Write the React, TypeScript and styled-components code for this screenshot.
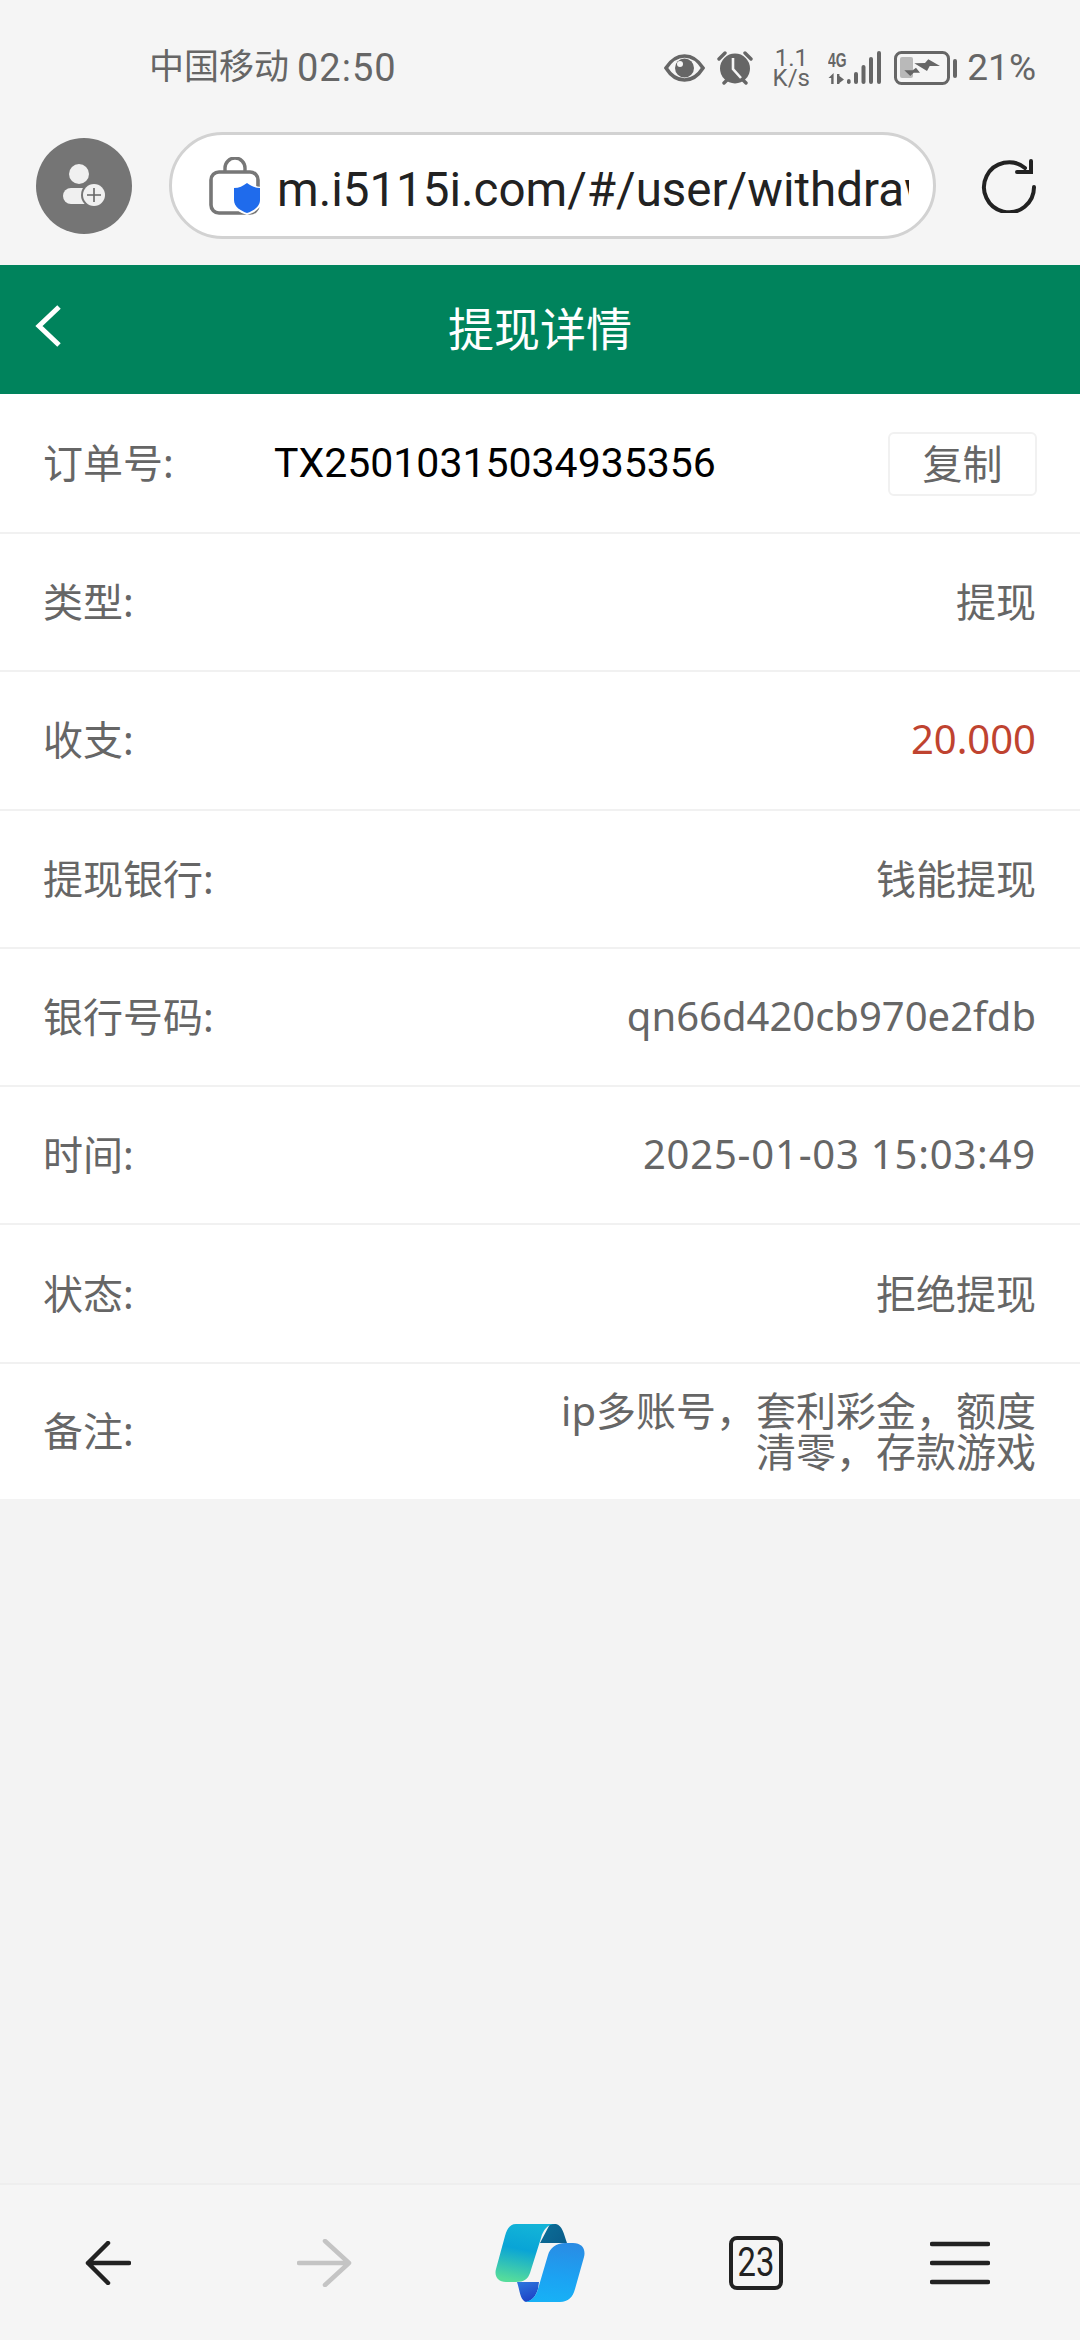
import styled, { createGlobalStyle } from 'styled-components';

const GlobalStyle = createGlobalStyle`
  html, body {
    margin: 0;
    padding: 0;
    background: #f3f3f3;
  }
  * {
    box-sizing: border-box;
  }
`;

const FONT = `Roboto, "Noto Sans CJK SC", "Noto Sans", sans-serif`;
const LIST_FONT = `"Noto Sans", "Noto Sans CJK SC", sans-serif`;

const Page = styled.div`
  width: 1080px;
  height: 2340px;
  display: flex;
  flex-direction: column;
  font-family: ${FONT};
  background: #f3f3f3;
`;

const BrowserTop = styled.div`
  height: 265px;
  background: #f5f5f5;
  display: flex;
  flex-direction: column;
`;

const StatusBar = styled.div`
  height: 132px;
  padding: 3px 44px 0 149px;
  display: flex;
  align-items: center;
  justify-content: space-between;
  color: #666;
`;

const Carrier = styled.div`
  font-size: 35px;
  line-height: 44px;
  display: flex;
  align-items: center;
  gap: 8px;
`;

const Clock = styled.span`
  font-size: 38px;
  letter-spacing: 1px;
`;

const StatusIcons = styled.div`
  display: flex;
  align-items: center;
`;

const Speed = styled.div`
  width: 38px;
  margin: 0 18px 0 19px;
  font-size: 24px;
  line-height: 20px;
  text-align: center;
  white-space: nowrap;
`;

const NetLabel = styled.span`
  position: absolute;
  left: 0;
  top: -1px;
  font-size: 21px;
  line-height: 20px;
  font-weight: 700;
  font-family: "Liberation Sans", sans-serif;
  transform: scaleX(0.66);
  transform-origin: left;
`;

const NetIcon = styled.div`
  position: relative;
  width: 54px;
  height: 34px;
  margin-right: 12px;
`;

const Percent = styled.div`
  font-size: 37px;
  margin-left: 9px;
`;

const IconGap = styled.span`
  width: 12px;
`;

const UrlRow = styled.div`
  display: flex;
  align-items: center;
  height: 107px;
  padding-left: 36px;
`;

const Avatar = styled.div`
  width: 96px;
  height: 96px;
  border-radius: 50%;
  background: #757575;
  display: flex;
  align-items: center;
  justify-content: center;
`;

const UrlField = styled.div`
  width: 767px;
  height: 107px;
  margin: 0 45px 0 37px;
  padding: 0 24px 0 37px;
  border: 3px solid #d2d2d2;
  border-radius: 54px;
  background: #fff;
  display: flex;
  align-items: center;
`;

const UrlText = styled.div`
  flex: 1;
  margin-left: 16px;
  padding-top: 8px;
  overflow: hidden;
  white-space: nowrap;
  font-size: 47.5px;
  color: #222;
`;

const Header = styled.div`
  height: 129px;
  background: #00835c;
  position: relative;
  display: flex;
  align-items: center;
  justify-content: center;
  color: #fff;
  font-size: 46px;
  padding-bottom: 8px;
`;

const BackButton = styled.div`
  position: absolute;
  left: 34px;
  top: 38px;
  display: flex;
`;

const List = styled.div`
  background: #fff;
  display: flex;
  flex-direction: column;
  font-family: ${LIST_FONT};
`;

const Row = styled.div<{ $height?: number }>`
  height: ${(p) => p.$height || 138.3}px;
  padding: 0 44px 0 43px;
  display: flex;
  align-items: center;
  justify-content: space-between;
  border-bottom: 2px solid #f1f1f1;
  font-size: 40px;
  color: #666;
  &:last-child {
    border-bottom: none;
  }
`;

const Label = styled.div`
  flex: none;
  padding-bottom: 4px;
`;

const OrderLabel = styled(Label)`
  width: 231px;
`;

const OrderNo = styled.div`
  flex: 1;
  color: #000;
  font-family: ${FONT};
  font-size: 41px;
`;

const CopyButton = styled.div`
  width: 149px;
  height: 64px;
  margin-top: 2px;
  margin-right: -1px;
  padding-bottom: 4px;
  border: 2px solid #f1f1f1;
  border-radius: 6px;
  display: flex;
  align-items: center;
  justify-content: center;
`;

const Value = styled.div<{ $red?: boolean; $spaced?: boolean }>`
  padding-bottom: 4px;
  color: ${(p) => (p.$red ? '#bf4330' : '#666')};
  text-align: right;
  letter-spacing: ${(p) => (p.$spaced ? '0.8px' : 'normal')};
`;

const Note = styled(Value)`
  width: 500px;
  padding-bottom: 0;
  line-height: 41px;
`;

const Spacer = styled.div`
  flex: 1;
`;

const BottomBar = styled.div`
  height: 157px;
  background: #f5f5f5;
  border-top: 2px solid #eeeeee;
  display: grid;
  grid-template-columns: repeat(5, 216px);
  align-items: center;
  justify-items: center;
`;

const TabCount = styled.div`
  width: 54px;
  height: 54px;
  border: 4px solid #222;
  border-radius: 8px;
  display: flex;
  align-items: center;
  justify-content: center;
  color: #222;
`;

const TabNumber = styled.span`
  font-size: 41px;
  line-height: 1;
  transform: scaleX(0.8);
`;

const MenuSlot = styled.div`
  display: flex;
  margin-right: 24px;
`;

const rows = [
  { label: '类型:', value: '提现' },
  { label: '收支:', value: '20.000', red: true },
  { label: '提现银行:', value: '钱能提现' },
  { label: '银行号码:', value: 'qn66d420cb970e2fdb' },
  { label: '时间:', value: '2025-01-03 15:03:49', spaced: true },
  { label: '状态:', value: '拒绝提现' },
];

function EyeIcon() {
  return (
    <svg width="41" height="28" viewBox="0 0 41 28">
      <path d="M2 14C7 6 13 2 20.5 2S34 6 39 14C34 22 28 26 20.5 26S7 22 2 14Z" fill="none" stroke="#666" strokeWidth="3.6" />
      <circle cx="20.5" cy="14" r="9.5" fill="#666" />
      <circle cx="16" cy="10" r="3" fill="#f5f5f5" />
    </svg>
  );
}

function AlarmIcon() {
  return (
    <svg width="36" height="35" viewBox="0 0 36 35">
      <circle cx="18" cy="18.5" r="15" fill="#666" />
      <path d="M2 9L8 3M34 9L28 3" stroke="#666" strokeWidth="3.4" strokeLinecap="round" />
      <path d="M7 33l3-3M29 33l-3-3" stroke="#666" strokeWidth="3.4" strokeLinecap="round" />
      <path d="M16 8V19L24 28" fill="none" stroke="#f5f5f5" strokeWidth="2.6" />
    </svg>
  );
}

function SignalBars() {
  return (
    <svg width="54" height="34" viewBox="0 0 54 34">
      <path d="M3.2 33V27H0.5L5.6 22V33Z" fill="#666" />
      <path d="M9 23H11.4V25L16 28.5L11.4 32V33H9Z" fill="#666" />
      <rect x="19" y="28" width="3.6" height="5" rx="1.8" fill="#666" />
      <rect x="26" y="21" width="4" height="12" rx="2" fill="#666" />
      <rect x="33.5" y="14" width="4" height="19" rx="2" fill="#666" />
      <rect x="41" y="6" width="4" height="27" rx="2" fill="#666" />
      <rect x="49" y="0" width="4" height="33" rx="2" fill="#666" />
    </svg>
  );
}

function BatteryIcon() {
  return (
    <svg width="64" height="34" viewBox="0 0 64 34">
      <rect x="1.5" y="1.5" width="53" height="31" rx="6" fill="none" stroke="#666" strokeWidth="3" />
      <rect x="6" y="6" width="13" height="21" rx="2" fill="#b9b9b9" />
      <path d="M20.3 12.3L31 12L34.3 8.3L46 15H35.7L33 20Z" fill="#666" />
      <path d="M10.3 19.3H18.7L22 16.7L26 21.7H19.7L16.3 25Z" fill="#666" />
      <rect x="59" y="8" width="4" height="19" rx="2" fill="#666" />
    </svg>
  );
}

function AvatarIcon() {
  return (
    <svg width="43" height="43" viewBox="0 0 43 43">
      <circle cx="16" cy="10" r="10" fill="#f0f0f0" />
      <rect x="0" y="24" width="34" height="16" rx="8" fill="#f0f0f0" />
      <circle cx="31" cy="31" r="13" fill="#757575" />
      <circle cx="31" cy="31" r="11" fill="#f0f0f0" />
      <path d="M31 24V38M24 31H38" stroke="#666" strokeWidth="1.6" />
    </svg>
  );
}

function LockIcon() {
  return (
    <svg width="52" height="58" viewBox="0 0 52 58">
      <path d="M16 16V11a10 10 0 0 1 20 0V16" fill="none" stroke="#777" strokeWidth="3.4" />
      <rect x="2" y="15" width="47" height="41" rx="8" fill="none" stroke="#777" strokeWidth="3.6" />
      <path d="M38 24C33 28 28 30 23 30V43C23 51 31 56 38 58C45 56 53 51 53 43V30C48 30 43 28 38 24Z" fill="#fff" />
      <path d="M38 26C34 29 30 31 25 31V43C25 50 32 54 38 56C44 54 51 50 51 43V31C46 31 42 29 38 26Z" fill="#1f6bec" />
    </svg>
  );
}

function ReloadIcon() {
  return (
    <svg width="56" height="54" viewBox="0 0 56 54">
      <path d="M44 9A25 25 0 1 0 53 28" fill="none" stroke="#222" strokeWidth="4" strokeLinecap="round" />
      <path d="M36 13H50V2" fill="none" stroke="#222" strokeWidth="4" strokeLinecap="round" />
    </svg>
  );
}

function ChevronBack() {
  return (
    <svg width="30" height="46" viewBox="0 0 30 46">
      <path d="M25 4L5 23L25 42" fill="none" stroke="#fff" strokeWidth="5" />
    </svg>
  );
}

function BackArrow() {
  return (
    <svg width="46" height="44" viewBox="0 0 46 44">
      <path d="M23 2L3 22L23 42M3 22H44" fill="none" stroke="#222" strokeWidth="4.5" strokeLinecap="round" strokeLinejoin="round" />
    </svg>
  );
}

function ForwardArrow() {
  return (
    <svg width="55" height="48" viewBox="0 0 55 48">
      <path d="M28 2L52 24L28 46M2 24H52" fill="none" stroke="#c4c4c4" strokeWidth="4.5" strokeLinecap="round" strokeLinejoin="round" />
    </svg>
  );
}

function CopilotLogo() {
  return (
    <svg width="92" height="80" viewBox="24 22 92 80">
      <defs>
        <linearGradient id="ribbonLeft" x1="0.6" y1="0" x2="0.4" y2="1">
          <stop offset="0" stopColor="#13b4d8" />
          <stop offset="0.45" stopColor="#09a4d6" />
          <stop offset="1" stopColor="#55dc9c" />
        </linearGradient>
        <linearGradient id="ribbonRight" x1="0.6" y1="0" x2="0.5" y2="1">
          <stop offset="0" stopColor="#2a8ce4" />
          <stop offset="0.6" stopColor="#1ba3f3" />
          <stop offset="1" stopColor="#17b1f6" />
        </linearGradient>
        <linearGradient id="foldTop" x1="0" y1="0" x2="1" y2="0.6">
          <stop offset="0" stopColor="#0c6f99" />
          <stop offset="1" stopColor="#0a5f8c" />
        </linearGradient>
        <linearGradient id="foldBottom" x1="0.3" y1="0" x2="0.7" y2="1">
          <stop offset="0" stopColor="#2c73dc" />
          <stop offset="1" stopColor="#1c3fc4" />
        </linearGradient>
      </defs>
      <path d="M80 23H86C92 24 94 33 97 42H70Z" fill="url(#foldTop)" />
      <path d="M46 23H85C78 23 73 29 71 37L60 72C58 78 54 81 46 81H36C28 81 24 75 26 68L35 35C37 28 40 23 46 23Z" fill="url(#ribbonLeft)" />
      <path d="M47 81H69L68 88C66 95 62 100 56 101C50 99 50 90 47 81Z" fill="url(#foldBottom)" />
      <path d="M95 42H103C112 42 116 48 114 56L105 88C103 96 98 101 90 101H55C62 100 66 95 68 88L78 54C80 47 86 42 95 42Z" fill="url(#ribbonRight)" />
    </svg>
  );
}

function MenuIcon() {
  return (
    <svg width="60" height="44" viewBox="0 0 60 44">
      <path d="M2 3H58M2 22H58M2 41H58" stroke="#222" strokeWidth="4.5" strokeLinecap="round" />
    </svg>
  );
}

export default function App() {
  return (
    <Page>
      <GlobalStyle />
      <BrowserTop>
        <StatusBar>
          <Carrier>
            <span>中国移动</span>
            <Clock>02:50</Clock>
          </Carrier>
          <StatusIcons>
            <EyeIcon />
            <IconGap />
            <AlarmIcon />
            <Speed>
              1.1
              <br />
              K/s
            </Speed>
            <NetIcon>
              <NetLabel>4G</NetLabel>
              <SignalBars />
            </NetIcon>
            <BatteryIcon />
            <Percent>21%</Percent>
          </StatusIcons>
        </StatusBar>
        <UrlRow>
          <Avatar>
            <AvatarIcon />
          </Avatar>
          <UrlField>
            <LockIcon />
            <UrlText>m.i5115i.com/#/user/withdraw</UrlText>
          </UrlField>
          <ReloadIcon />
        </UrlRow>
      </BrowserTop>
      <Header>
        <BackButton>
          <ChevronBack />
        </BackButton>
        提现详情
      </Header>
      <List>
        <Row $height={140}>
          <OrderLabel>订单号:</OrderLabel>
          <OrderNo>TX25010315034935356</OrderNo>
          <CopyButton>复制</CopyButton>
        </Row>
        {rows.map((r) => (
          <Row key={r.label}>
            <Label>{r.label}</Label>
            <Value $red={r.red} $spaced={r.spaced}>
              {r.value}
            </Value>
          </Row>
        ))}
        <Row $height={135}>
          <Label>备注:</Label>
          <Note>{'ip多账号\uFF0C套利彩金\uFF0C额度清零\uFF0C存款游戏'}</Note>
        </Row>
      </List>
      <Spacer />
      <BottomBar>
        <BackArrow />
        <ForwardArrow />
        <CopilotLogo />
        <TabCount>
          <TabNumber>23</TabNumber>
        </TabCount>
        <MenuSlot>
          <MenuIcon />
        </MenuSlot>
      </BottomBar>
    </Page>
  );
}
